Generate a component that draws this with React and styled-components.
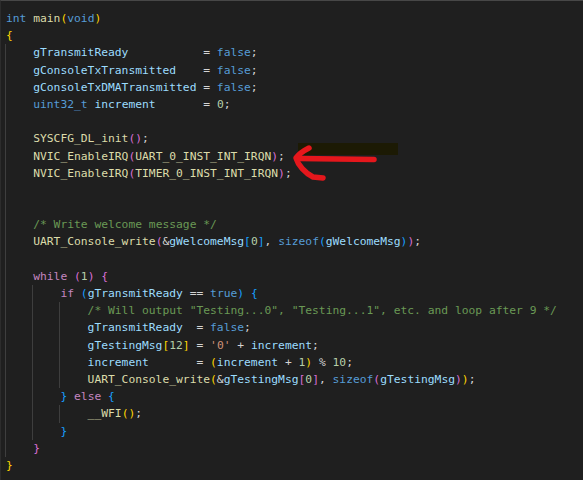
import React from 'react'
import styled, {createGlobalStyle} from 'styled-components';

const GlobalStyle = createGlobalStyle`
  html, body {
    margin: 0;
    padding: 0;
    background: #1f1f1f;
  }
`;

const colors = {
  kw: '#569cd6',
  fn: '#dcdcaa',
  mac: '#dcdcaa',
  v: '#9cdcfe',
  num: '#b5cea8',
  str: '#ce9178',
  com: '#6a9955',
  ctl: '#c586c0',
  op: '#d4d4d4',
  b1: '#ffd700',
  b2: '#da70d6',
  b3: '#179fff',
};

const Editor = styled.div`
  position: relative;
  width: 583px;
  height: 480px;
  box-sizing: border-box;
  overflow: hidden;
  background: #1f1f1f;
  border-top: 1px solid #474747;
  border-left: 1px solid #2c2c2c;
  padding: 9px 0 0 5px;
  font-family: "DejaVu Sans Mono", "Liberation Mono", monospace;
  font-size: 11.3px;
  color: #d4d4d4;
`;

const Line = styled.div`
  display: flex;
  height: 17.2px;
  line-height: 17.2px;
  white-space: pre;
`;

const Indent = styled.span`
  display: inline-block;
  width: 4ch;
  flex: none;
  box-shadow: inset 1px 0 0 #3e3e3e;
  margin-left: -1px;
  padding-left: 1px;
`;

const Tok = styled.span`
  color: ${p => colors[p.$kind] || colors.op};
`;

const Redacted = styled.div`
  position: absolute;
  left: 297px;
  top: 142px;
  width: 100px;
  height: 12px;
  background: #1c1a04;
`;

const Arrow = styled.svg`
  position: absolute;
  left: 0;
  top: 0;
  pointer-events: none;
`;

// pad a name so the "=" signs line up
const eq = (name, width) => ' '.repeat(Math.max(0, width - name.length)) + ' = ';

const lines = [
  [0, [['int', 'kw'], ' ', ['main', 'fn'], ['(', 'b1'], ['void', 'kw'], [')', 'b1']]],
  [0, [['{', 'b1']]],
  [1, [['gTransmitReady', 'v'], eq('gTransmitReady', 24), ['false', 'kw'], ';']],
  [1, [['gConsoleTxTransmitted', 'v'], eq('gConsoleTxTransmitted', 24), ['false', 'kw'], ';']],
  [1, [['gConsoleTxDMATransmitted', 'v'], eq('gConsoleTxDMATransmitted', 24), ['false', 'kw'], ';']],
  [1, [['uint32_t', 'kw'], ' ', ['increment', 'v'], eq('uint32_t increment', 24), ['0', 'num'], ';']],
  [1, []],
  [1, [['SYSCFG_DL_init', 'fn'], ['()', 'b2'], ';']],
  [1, [['NVIC_EnableIRQ', 'fn'], ['(', 'b2'], ['UART_0_INST_INT_IRQN', 'mac'], [')', 'b2'], ';']],
  [1, [['NVIC_EnableIRQ', 'fn'], ['(', 'b2'], ['TIMER_0_INST_INT_IRQN', 'mac'], [')', 'b2'], ';']],
  [1, []],
  [1, []],
  [1, [['/* Write welcome message */', 'com']]],
  [1, [['UART_Console_write', 'fn'], ['(', 'b2'], '&', ['gWelcomeMsg', 'v'], ['[', 'b3'], ['0', 'num'], [']', 'b3'], ', ', ['sizeof', 'kw'], ['(', 'b3'], ['gWelcomeMsg', 'v'], [')', 'b3'], [')', 'b2'], ';']],
  [1, []],
  [1, [['while', 'ctl'], ' ', ['(', 'b2'], ['1', 'num'], [')', 'b2'], ' ', ['{', 'b2']]],
  [2, [['if', 'ctl'], ' ', ['(', 'b3'], ['gTransmitReady', 'v'], ' == ', ['true', 'kw'], [')', 'b3'], ' ', ['{', 'b3']]],
  [3, [['/* Will output "Testing...0", "Testing...1", etc. and loop after 9 */', 'com']]],
  [3, [['gTransmitReady', 'v'], eq('gTransmitReady', 15), ['false', 'kw'], ';']],
  [3, [['gTestingMsg', 'v'], ['[', 'b1'], ['12', 'num'], [']', 'b1'], ' = ', ["'0'", 'str'], ' + ', ['increment', 'v'], ';']],
  [3, [['increment', 'v'], eq('increment', 15), ['(', 'b1'], ['increment', 'v'], ' + ', ['1', 'num'], [')', 'b1'], ' % ', ['10', 'num'], ';']],
  [3, [['UART_Console_write', 'fn'], ['(', 'b1'], '&', ['gTestingMsg', 'v'], ['[', 'b2'], ['0', 'num'], [']', 'b2'], ', ', ['sizeof', 'kw'], ['(', 'b2'], ['gTestingMsg', 'v'], [')', 'b2'], [')', 'b1'], ';']],
  [2, [['}', 'b3'], ' ', ['else', 'ctl'], ' ', ['{', 'b3']]],
  [3, [['__WFI', 'fn'], ['()', 'b1'], ';']],
  [2, [['}', 'b3']]],
  [1, [['}', 'b2']]],
  [0, [['}', 'b1']]],
];

function CodeLine({depth, tokens}) {
  return (
    <Line>
      {Array.from({length: depth}).map((_, i) => <Indent key={i} />)}
      {tokens.map((t, i) =>
        typeof t === 'string'
          ? <Tok key={i} $kind="op">{t}</Tok>
          : <Tok key={i} $kind={t[1]}>{t[0]}</Tok>
      )}
    </Line>
  );
}

export default function App() {
  return (
    <>
      <GlobalStyle />
      <Editor>
        {lines.map(([depth, tokens], i) => <CodeLine key={i} depth={depth} tokens={tokens} />)}
        <Redacted />
        <Arrow width="583" height="480" viewBox="0 0 583 480">
          <path
            d="M308 147 C302 150 298 153 295 157 C297 164 304 172 312 176 L322 177"
            fill="none" stroke="#e5171c" strokeWidth="5.5" strokeLinecap="round" strokeLinejoin="round"
          />
          <path
            d="M298 157.5 L373 158.5"
            fill="none" stroke="#e5171c" strokeWidth="5.5" strokeLinecap="round"
          />
        </Arrow>
      </Editor>
    </>
  )
}
